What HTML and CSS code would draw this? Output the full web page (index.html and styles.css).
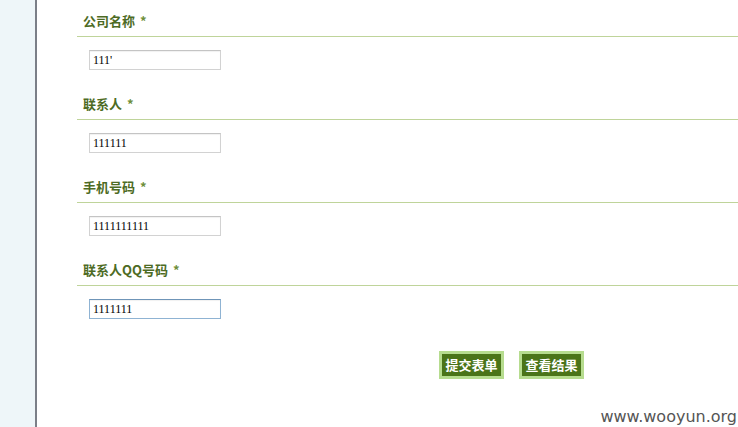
FILE: index.html
```html
<!DOCTYPE html>
<html>
<head>
<meta charset="utf-8">
<link rel="stylesheet" href="styles.css">
</head>
<body>
<div class="page">
  <div class="sidebar"></div>
  <div class="main">
    <div class="field">
      <div class="label">公司名称 <span class="req">*</span></div>
      <input class="text" type="text" value="111'">
    </div>
    <div class="field">
      <div class="label">联系人 <span class="req">*</span></div>
      <input class="text" type="text" value="111111">
    </div>
    <div class="field">
      <div class="label">手机号码 <span class="req">*</span></div>
      <input class="text" type="text" value="1111111111">
    </div>
    <div class="field">
      <div class="label">联系人QQ号码 <span class="req">*</span></div>
      <input class="text focus" type="text" value="1111111">
    </div>
    <div class="actions">
      <button class="btn">提交表单</button>
      <button class="btn">查看结果</button>
    </div>
  </div>
</div>
<div class="watermark">www.wooyun.org</div>
</body>
</html>
```
FILE: styles.css
```css
html, body {
  margin: 0;
  padding: 0;
  background: #fff;
  height: 427px;
  overflow: hidden;
}
.page {
  display: flex;
  height: 427px;
}
.sidebar {
  width: 35px;
  flex: none;
  background: #eef6f9;
  border-right: 2px solid #7b7f88;
}
.main {
  flex: 1;
  padding: 11px 0 0 40px;
}
.field {
  height: 59px;
}
.field + .field {
  margin-top: 24px;
}
.label {
  height: 20px;
  overflow: hidden;
  font-family: "Noto Sans CJK SC", sans-serif;
  font-weight: bold;
  font-size: 13px;
  line-height: 20px;
  color: #4d6b24;
  padding: 0 0 5px 6px;
  border-bottom: 1px solid #bfd49a;
}
.req {
  color: #6f8f3a;
  margin-left: 2px;
}
.text {
  display: block;
  box-sizing: border-box;
  margin: 13px 0 0 12px;
  width: 132px;
  height: 20px;
  padding: 0 0 0 3px;
  border: 1px solid #d2d2d2;
  border-top-color: #c4c4c4;
  box-shadow: inset 0 1px 1px rgba(0,0,0,0.06);
  font-family: "Liberation Serif", serif;
  font-size: 12px;
  color: #000;
  outline: none;
}
.text.focus {
  border-color: #8fb3d3;
  border-top-color: #6f95b8;
}
.actions {
  display: flex;
  gap: 15px;
  margin: 32px 0 0 362px;
}
.btn {
  box-sizing: border-box;
  width: 65px;
  height: 28px;
  padding: 0;
  background: #4a7419;
  border: 3px solid #b6dc8f;
  color: #fff;
  font-family: "Noto Sans CJK SC", sans-serif;
  font-weight: bold;
  font-size: 13px;
  line-height: 20px;
}
.watermark {
  position: absolute;
  right: 1px;
  bottom: 1px;
  font-family: "DejaVu Sans", sans-serif;
  font-size: 16px;
  color: #555;
}
```
